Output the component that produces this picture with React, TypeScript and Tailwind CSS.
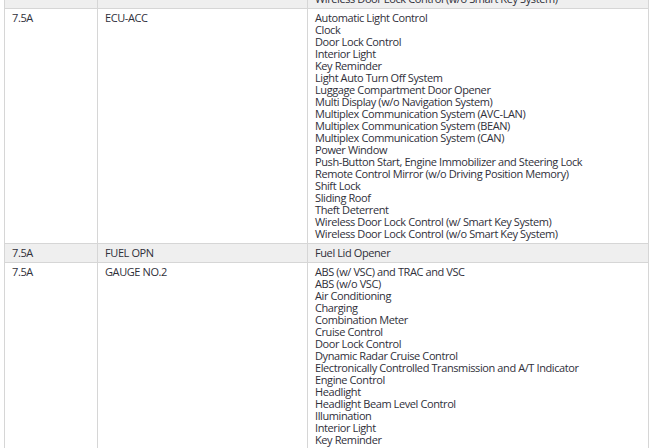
import React from "react";

type Row = { amp: string; name: string; items: string[]; shaded?: boolean };

const rows: Row[] = [
  {
    amp: "",
    name: "",
    items: ["Wireless Door Lock Control (w/o Smart Key System)"],
    shaded: true,
  },
  {
    amp: "7.5A",
    name: "ECU-ACC",
    items: [
      "Automatic Light Control",
      "Clock",
      "Door Lock Control",
      "Interior Light",
      "Key Reminder",
      "Light Auto Turn Off System",
      "Luggage Compartment Door Opener",
      "Multi Display (w/o Navigation System)",
      "Multiplex Communication System (AVC-LAN)",
      "Multiplex Communication System (BEAN)",
      "Multiplex Communication System (CAN)",
      "Power Window",
      "Push-Button Start, Engine Immobilizer and Steering Lock",
      "Remote Control Mirror (w/o Driving Position Memory)",
      "Shift Lock",
      "Sliding Roof",
      "Theft Deterrent",
      "Wireless Door Lock Control (w/ Smart Key System)",
      "Wireless Door Lock Control (w/o Smart Key System)",
    ],
  },
  { amp: "7.5A", name: "FUEL OPN", items: ["Fuel Lid Opener"], shaded: true },
  {
    amp: "7.5A",
    name: "GAUGE NO.2",
    items: [
      "ABS (w/ VSC) and TRAC and VSC",
      "ABS (w/o VSC)",
      "Air Conditioning",
      "Charging",
      "Combination Meter",
      "Cruise Control",
      "Door Lock Control",
      "Dynamic Radar Cruise Control",
      "Electronically Controlled Transmission and A/T Indicator",
      "Engine Control",
      "Headlight",
      "Headlight Beam Level Control",
      "Illumination",
      "Interior Light",
      "Key Reminder",
      "Light Auto Turn Off System",
      "Power Window",
    ],
  },
];

export default function App() {
  return (
    <div className="h-[448px] w-[650px] overflow-hidden bg-white font-['Open_Sans',sans-serif] text-[11px] leading-[12px] tracking-[-0.4px] text-[#30303a]">
      <table className="ml-[4px] mt-[-11px] w-[645px] table-fixed border-collapse">
        <colgroup>
          <col className="w-[93px]" />
          <col className="w-[210px]" />
          <col />
        </colgroup>
        <tbody>
          {rows.map((row, i) => (
            <tr key={i} className={row.shaded ? "bg-[#efefef]" : "bg-white"}>
              <td className="border border-[#d6d6d6] px-[7px] py-[3px] align-top">{row.amp}</td>
              <td className="border border-[#d6d6d6] px-[7px] py-[3px] align-top">{row.name}</td>
              <td className="border border-[#d6d6d6] px-[7px] py-[3px] align-top">
                {row.items.map((item) => (
                  <div key={item} className="whitespace-nowrap">
                    {item}
                  </div>
                ))}
              </td>
            </tr>
          ))}
        </tbody>
      </table>
    </div>
  );
}
